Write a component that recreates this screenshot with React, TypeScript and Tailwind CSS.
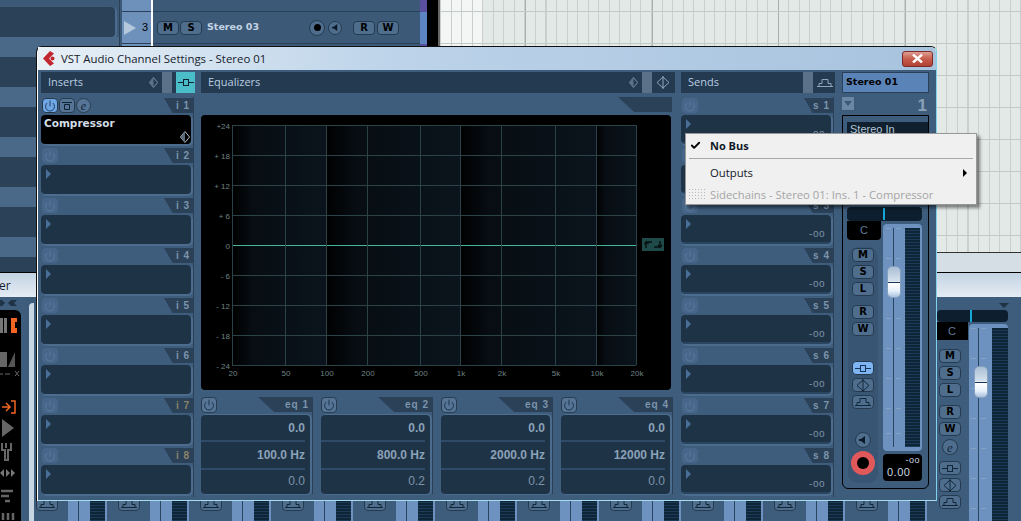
import { Power, Check } from 'lucide-react';

const panelTexture =
  'bg-[repeating-linear-gradient(to_bottom,#3d5b7a_0_1px,#3f5e7d_1px_2px)]';
const meterStripes =
  'bg-[repeating-linear-gradient(to_bottom,#0e2437_0_2px,#1b3b58_2px_3px)]';

const freqLines = [31, 84, 125, 166, 219, 259, 300, 354, 395, 435];
const freqLabels = ['20', '50', '100', '200', '500', '1k', '2k', '5k', '10k', '20k'];
const gainLabels = ['+24', '+ 18', '+ 12', '+ 6', '0', '- 6', '- 12', '- 18', '- 24'];

const eqBands = [
  { tab: 'eq 1', gain: '0.0', freq: '100.0 Hz', q: '0.0' },
  { tab: 'eq 2', gain: '0.0', freq: '800.0 Hz', q: '0.2' },
  { tab: 'eq 3', gain: '0.0', freq: '2000.0 Hz', q: '0.2' },
  { tab: 'eq 4', gain: '0.0', freq: '12000 Hz', q: '0.0' },
];

function InsertIcon({ color = '#b9cde0' }: { color?: string }) {
  return (
    <svg width="16" height="9" viewBox="0 0 16 9" fill="none" stroke={color}>
      <path d="M0 4.5h5M11 4.5h5" />
      <rect x="5.5" y="1.5" width="5" height="6" />
    </svg>
  );
}

function EqIcon({ color = '#b9cde0' }: { color?: string }) {
  return (
    <svg width="14" height="13" viewBox="0 0 14 13" fill="none" stroke={color}>
      <path d="M7 0v13M1 6.5L7 1l6 5.5L7 12z" />
    </svg>
  );
}

function SendIcon({ color = '#b9cde0' }: { color?: string }) {
  return (
    <svg width="16" height="10" viewBox="0 0 16 10" fill="none" stroke={color}>
      <path d="M0 8.5h16M2 8.5V5.5h3V1.5h6v4h3v3" />
    </svg>
  );
}

function HalfDiamond({ size = 11, fill = '#c9d6e2', half = '#c9d6e2' }: { size?: number; fill?: string; half?: string }) {
  return (
    <svg width={size} height={size + 2} viewBox="0 0 11 13">
      <path d="M5.5 0.5L10.5 6.5L5.5 12.5L0.5 6.5z" fill="none" stroke={fill} />
      <path d="M5.5 0.5L0.5 6.5L5.5 12.5z" fill={half} />
    </svg>
  );
}

function PowerButton({ active, lit }: { active?: boolean; lit?: boolean }) {
  if (lit) {
    return (
      <div className="flex h-[15px] w-[16px] items-center justify-center rounded-sm border border-[#27394c] bg-[#6fa6e6]">
        <Power size={12} color="#0f2338" strokeWidth={1.6} />
      </div>
    );
  }
  return (
    <div
      className={
        active
          ? 'flex h-[16px] w-[16px] items-center justify-center rounded-sm border border-[#283c50] bg-[#567596]'
          : 'flex h-[15px] w-[16px] items-center justify-center rounded-sm bg-[#47668a]'
      }
    >
      <Power size={12} color={active ? '#0f2338' : '#5f7f9f'} strokeWidth={1.6} />
    </div>
  );
}

function Tab({ label, tan, wide }: { label: string; tan?: boolean; wide?: boolean }) {
  return (
    <div
      className={`flex h-[15px] items-center justify-end bg-[#2a4158] pr-[3px] font-['Liberation_Sans',sans-serif] text-[10px] font-bold tracking-[1px] [clip-path:polygon(0_0,100%_0,100%_100%,30%_100%)] ${
        wide ? 'w-[54px]' : 'w-[29px]'
      } ${tan ? 'text-[#8c8468]' : 'text-[#7d95ab]'}`}
    >
      {label}
    </div>
  );
}

function Slot({ label, tan, showLevel }: { label: string; tan?: boolean; showLevel?: boolean }) {
  return (
    <div className="flex h-[50px] w-[153px] flex-col border-r border-[#2a4058]">
      <div className="flex h-[18px] items-start justify-between pt-[1px] pl-[1px]">
        <PowerButton />
        <Tab label={label} tan={tan} />
      </div>
      <div
        className={`relative h-[29px] w-[150px] rounded-sm bg-[#1f3347] shadow-[1px_1px_0_1px_#4c6c8d] ${
          showLevel ? 'border-b-2 border-[#2a4560]' : ''
        }`}
      >
        <div className="absolute top-[4px] left-[5px] h-0 w-0 border-y-[5px] border-l-[5px] border-y-transparent border-l-[#4a6f97]" />
        {showLevel && (
          <span className="absolute right-[6px] bottom-[1px] font-['Liberation_Sans',sans-serif] text-[10px] tracking-[0.5px] text-[#7d93a8]">
            -oo
          </span>
        )}
      </div>
    </div>
  );
}

function CompressorSlot() {
  return (
    <div className="flex h-[50px] w-[153px] flex-col border-r border-[#2a4058]">
      <div className="flex h-[18px] items-start justify-between pt-[1px] pl-[1px]">
        <div className="flex gap-[1px]">
          <PowerButton lit />
          <div className="flex h-[15px] w-[16px] items-center justify-center rounded-sm border border-[#283c50] bg-[#567596]">
            <svg width="10" height="10" viewBox="0 0 10 10" fill="none" stroke="#0f2338">
              <path d="M0 1.5h10M2.5 3.5h5v5h-5z" />
            </svg>
          </div>
          <div className="flex h-[15px] w-[15px] items-center justify-center rounded-full border border-[#283c50] bg-[#567596] font-['Liberation_Serif',serif] text-[12px] leading-none text-[#0f2338] italic">
            e
          </div>
        </div>
        <Tab label="i 1" />
      </div>
      <div className="relative h-[29px] w-[150px] rounded-sm bg-black px-[3px] py-[1px] font-['DejaVu_Sans',sans-serif] text-[10.5px] leading-[15px] font-bold text-[#d3dde6] shadow-[1px_1px_0_1px_#4c6c8d]">
        Compressor
        <div className="absolute right-[1px] bottom-[1px]">
          <HalfDiamond size={10} half="#5b6b7a" />
        </div>
      </div>
    </div>
  );
}

function EqGraph() {
  const bands = [
    [31, 94],
    [125, 134],
    [259, 136],
    [395, 40],
  ];
  return (
    <svg width="470" height="275" viewBox="0 0 470 275" className="rounded-sm bg-black">
      <defs>
        <linearGradient id="band">
          <stop offset="0" stopColor="#000" />
          <stop offset="0.22" stopColor="#070d13" />
          <stop offset="1" stopColor="#0b141c" />
        </linearGradient>
      </defs>
      {bands.map(([x, w]) => (
        <rect key={x} x={x} y={10} width={w} height={240} fill="url(#band)" />
      ))}
      {gainLabels.map((g, i) => (
        <g key={g}>
          <line x1="31" x2="435" y1={10.5 + i * 30} y2={10.5 + i * 30} stroke={i === 4 ? '#45b59e' : '#2b4246'} />
          <text
            x="29"
            y={13.5 + i * 30}
            textAnchor="end"
            fontSize="8"
            fill="#6f8285"
            fontFamily="'Liberation Sans', sans-serif"
          >
            {g}
          </text>
        </g>
      ))}
      {freqLines.map((x, i) => (
        <g key={x}>
          <line x1={x + 0.5} x2={x + 0.5} y1="10" y2="250" stroke="#2b4246" />
          <text
            x={x + 1}
            y="261"
            textAnchor="middle"
            fontSize="8"
            fill="#6f8285"
            fontFamily="'Liberation Sans', sans-serif"
          >
            {freqLabels[i]}
          </text>
        </g>
      ))}
      <rect x="441" y="123" width="22" height="13" fill="#1f4a4a" />
      <path
        d="M445 133v-6h6M443.500 129l2-2.500l2 2.500M459 126v6h-6M457 130l2 2.500l2-2.500"
        fill="none"
        stroke="#05100f"
        strokeWidth="1.400"
      />
    </svg>
  );
}

function EqBand({ tab, gain, freq, q }: { tab: string; gain: string; freq: string; q: string }) {
  return (
    <div className="flex h-[97px] w-[112px] flex-col border-r border-[#2a4058]">
      <div className="flex h-[18px] items-start justify-between">
        <PowerButton active />
        <Tab label={tab} wide />
      </div>
      <div className="flex h-[79px] w-[109px] flex-col rounded-sm bg-[#1f3347] pr-[5px] text-right font-['Liberation_Sans',sans-serif] shadow-[1px_0_0_1px_#4c6c8d]">
        <div className="h-[27px] border-b-2 border-[#2f4a66] text-[12px] leading-[26px] font-bold text-[#8ba1b7]">
          {gain}
        </div>
        <div className="h-[28px] border-b-2 border-[#2f4a66] text-[12px] leading-[27px] font-bold text-[#8ba1b7]">
          {freq}
        </div>
        <div className="text-[12px] leading-[22px] text-[#7d93a8]">{q}</div>
      </div>
    </div>
  );
}

function StripButton({ label }: { label: string }) {
  return (
    <div className="flex h-[14px] w-[22px] items-center justify-center rounded-sm border border-[#253a4f] bg-[#4f6e8e] font-['DejaVu_Sans',sans-serif] text-[10px] leading-none font-bold text-black">
      {label}
    </div>
  );
}

function IconButton({ children, lit }: { children: React.ReactNode; lit?: boolean }) {
  return (
    <div
      className={
        lit
          ? 'flex h-[14px] w-[22px] items-center justify-center rounded-sm border border-[#253a4f] bg-[#7eb4f2]'
          : 'flex h-[14px] w-[22px] items-center justify-center rounded-sm border border-[#253a4f] bg-[#4f6e8e]'
      }
    >
      {children}
    </div>
  );
}

function FaderScale({ height }: { height: number }) {
  const ticks = [0, 30, 60, 90, 120, 150, 180, 205];
  return (
    <svg width="20" height={height} viewBox={`0 0 20 ${height}`} fill="none">
      <line x1="9.500" x2="9.500" y1="0" y2={height} stroke="#2b4560" />
      {ticks.map((t) => (
        <path key={t} d={`M2 ${t + 0.5}h5M12 ${t + 0.5}h5`} stroke="#86a3c4" />
      ))}
    </svg>
  );
}

function FaderKnob() {
  return (
    <div className="flex h-[32px] w-[14px] items-center rounded-[5px] border border-[#86a0bf] bg-[linear-gradient(to_bottom,#a9bed5,#d3e0ec_45%,#ffffff_55%,#e6effa_80%,#a8c0dc)]">
      <div className="h-[1px] w-full bg-[#17355a]" />
    </div>
  );
}

function ChannelStrip() {
  return (
    <div className="flex w-[87px] flex-col">
      <div className="flex h-[21px] items-center border border-[#2a4058] bg-[#5a84b8] pl-[3px] font-['DejaVu_Sans',sans-serif] text-[9.5px] font-bold text-black">
        Stereo 01
      </div>
      <div className="flex h-[22px] items-start justify-between pt-[4px] pr-[2px]">
        <div className="flex h-[13px] w-[12px] items-center justify-center bg-[#6b87a5]">
          <div className="h-0 w-0 border-x-[4px] border-t-[5px] border-x-transparent border-t-[#3c5a78]" />
        </div>
        <span className="font-['Liberation_Sans',sans-serif] text-[17px] leading-[17px] font-bold text-[#8ba1b7]">1</span>
      </div>
      <div className="flex h-[374px] w-[87px] flex-col rounded-b-md border-x border-t border-b border-black pl-[4px]">
        <div className="mt-[6px] h-[78px] w-[81px] bg-[#10202f] px-[3px] font-['Liberation_Sans',sans-serif] text-[11px] leading-[14px] text-[#b5c6d6]">
          Stereo In
        </div>
        <div className="mt-[7px] flex h-[14px] w-[75px] items-center rounded-sm bg-[#0d1e2e] pl-[36px]">
          <div className="h-[12px] w-[2px] bg-[#14a7d8]" />
        </div>
        <div className="flex">
          <div className="flex w-[36px] flex-col">
            <div className="flex h-[19px] w-[34px] items-center justify-center rounded-b-sm bg-black font-['Liberation_Sans',sans-serif] text-[11px] text-[#5f7d9b]">
              C
            </div>
            <div className="mt-[7px] ml-[1px] flex h-[236px] w-[30px] flex-col items-center rounded-[10px] bg-[#385573] pt-[1px]">
              <div className="flex flex-col gap-[3px]">
                <StripButton label="M" />
                <StripButton label="S" />
                <StripButton label="L" />
              </div>
              <div className="mt-[9px] flex flex-col gap-[3px]">
                <StripButton label="R" />
                <StripButton label="W" />
              </div>
              <div className="mt-[25px] flex flex-col gap-[3px]">
                <IconButton lit>
                  <InsertIcon color="#14345c" />
                </IconButton>
                <IconButton>
                  <EqIcon color="#12263a" />
                </IconButton>
                <IconButton>
                  <SendIcon color="#12263a" />
                </IconButton>
              </div>
              <div className="mt-[23px] flex h-[16px] w-[16px] shrink-0 items-center justify-center rounded-full border border-[#253a4f] bg-[#4f6e8e] text-black">
                <svg width="8" height="8" viewBox="0 0 8 8" fill="#0b1a28">
                  <path d="M0 3h2l4-3v8L2 5H0z" />
                </svg>
              </div>
              <div className="mt-[3px] flex h-[24px] w-[24px] shrink-0 items-center justify-center rounded-full bg-[#e0585a]">
                <div className="h-[12px] w-[12px] rounded-full bg-black" />
              </div>
            </div>
          </div>
          <div className="mt-[3px] flex w-[39px] flex-col">
            <div className="relative flex h-[227px] justify-between rounded-sm bg-[#6d92bf] pt-[4px] pr-[2px] pl-[1px]">
              <FaderScale height={219} />
              <div className={`h-[219px] w-[15px] ${meterStripes}`} />
              <div className="absolute top-[42px] left-[4px]">
                <FaderKnob />
              </div>
            </div>
            <div className="mt-[3px] flex h-[27px] flex-col items-end rounded-sm bg-black pr-[2px] font-['Liberation_Sans',sans-serif] text-[#c9d6e2]">
              <span className="text-[9px] leading-[13px] tracking-[0.5px]">-oo</span>
              <span className="w-full pl-[4px] text-[11px] leading-[11px] tracking-[0.5px]">0.00</span>
            </div>
          </div>
        </div>
      </div>
    </div>
  );
}

function VstWindow() {
  return (
    <div className="absolute top-[46px] left-[36px] h-[455px] w-[901px] rounded-t-md border-x border-t border-[#111] border-r-[#7fd2ea] shadow-[inset_1px_0_0_#fff]">
      <div className="ml-[1px] flex h-[23px] items-center justify-between rounded-tr-md bg-[linear-gradient(to_right,#e8f0f6,#bcd3e9_40%,#a8c3de)] pr-[3px] pl-[5px]">
        <div className="flex items-center gap-[5px] font-['Open_Sans',sans-serif] text-[11.4px] text-[#15202c]">
          <svg width="13" height="15" viewBox="0 0 13 15" fill="#c2262e">
            <path d="M7 0L0 7.500L7 15L11 12.500L6 7.500L11 2.500z" />
            <circle cx="9.500" cy="7.500" r="2" />
          </svg>
          VST Audio Channel Settings - Stereo 01
        </div>
        <div className="flex h-[16px] w-[31px] items-center justify-center rounded-[3px] border border-[#7d2a28] bg-[linear-gradient(to_bottom,#dd9f92,#c65c4c_50%,#b24334)]">
          <svg width="11" height="9" viewBox="0 0 11 9" stroke="#fff" strokeWidth="2.400">
            <path d="M1 0.500L10 8.500M10 0.500L1 8.500" />
          </svg>
        </div>
      </div>

      <div className={`ml-[1px] flex h-[431px] gap-[6px] border-b border-[#a5dcec] pt-[2px] pl-[3px] ${panelTexture}`}>
        <div className="flex w-[154px] flex-col">
          <div className="mb-[4px] flex h-[21px] items-center justify-between bg-[#243a50] pl-[7px] font-['Open_Sans',sans-serif] text-[11px] text-[#b9cde0]">
            Inserts
            <div className="flex h-full items-center gap-[4px]">
              <HalfDiamond size={9} fill="#8ea5ba" half="#5b7089" />
              <div className="h-full w-[10px] bg-[#5b7089]" />
              <div className="flex h-full w-[19px] items-center justify-center bg-[#4abdc9]">
                <InsertIcon color="#123" />
              </div>
            </div>
          </div>
          <CompressorSlot />
          <Slot label="i 2" />
          <Slot label="i 3" />
          <Slot label="i 4" />
          <Slot label="i 5" />
          <Slot label="i 6" />
          <Slot label="i 7" tan />
          <Slot label="i 8" tan />
        </div>

        <div className="flex w-[474px] flex-col">
          <div className="mb-[4px] flex h-[21px] items-center justify-between bg-[#243a50] pr-[5px] pl-[7px] font-['Open_Sans',sans-serif] text-[11px] text-[#b9cde0]">
            Equalizers
            <div className="flex h-full items-center gap-[4px]">
              <HalfDiamond size={9} fill="#8ea5ba" half="#5b7089" />
              <div className="h-full w-[10px] bg-[#5b7089]" />
              <EqIcon color="#8ea5ba" />
            </div>
          </div>
          <div className="flex h-[18px] justify-end pr-[3px]">
            <div className="h-[15px] w-[54px] bg-[#2a4158] [clip-path:polygon(0_0,100%_0,100%_100%,30%_100%)]" />
          </div>
          <EqGraph />
          <div className="mt-[7px] flex gap-[8px]">
            {eqBands.map((b) => (
              <EqBand key={b.tab} {...b} />
            ))}
          </div>
        </div>

        <div className="flex w-[154px] flex-col">
          <div className="mb-[4px] flex h-[21px] items-center justify-between bg-[#243a50] pr-[2px] pl-[7px] font-['Open_Sans',sans-serif] text-[11px] text-[#b9cde0]">
            Sends
            <div className="flex h-full items-center gap-[4px]">
              <div className="h-full w-[10px] bg-[#5b7089]" />
              <SendIcon color="#8ea5ba" />
            </div>
          </div>
          {[1, 2, 3, 4, 5, 6, 7, 8].map((n) => (
            <Slot key={n} label={`s ${n}`} showLevel />
          ))}
        </div>

        <div className="ml-[1px]">
          <ChannelStrip />
        </div>
      </div>
    </div>
  );
}

function BusMenu() {
  return (
    <div className="absolute top-[133px] left-[685px] flex h-[72px] w-[292px] flex-col border border-[#979797] bg-[#f0f0f0] font-['Open_Sans',sans-serif] text-[11.3px] text-[#101828] shadow-[3px_3px_3px_rgba(0,0,0,0.45)]">
      <div className="flex h-[24px] items-center pl-[24px] text-[11px] font-bold">
        <Check size={11} strokeWidth={4} className="mr-[9px] -ml-[20px] text-black" />
        No Bus
      </div>
      <div className="mx-[3px] h-[1px] bg-[#a9a9a9]" />
      <div className="flex h-[28px] items-center justify-between pt-[2px] pr-[9px] pl-[24px]">
        Outputs
        <div className="h-0 w-0 border-y-[4px] border-l-[4px] border-y-transparent border-l-black" />
      </div>
      <div className="relative flex h-[18px] items-center pl-[24px] text-[#a5a5a5]">
        <div className="absolute top-[2px] left-[2px] h-[13px] w-[18px] bg-[radial-gradient(#b8b8b8_0.6px,transparent_0.8px)] bg-[length:3px_3px]" />
        Sidechains - Stereo 01: Ins. 1 - Compressor
      </div>
    </div>
  );
}

function MixerStrip() {
  return (
    <div className="flex w-[82px] shrink-0 flex-col pt-[6px]">
      <div className="flex justify-end pr-[9px]">
        <div className="h-0 w-0 border-x-[5px] border-t-[5px] border-x-transparent border-t-[#1f3347]" />
      </div>
      <div className="mt-[2px] ml-[1px] flex h-[14px] w-[71px] items-center rounded-sm bg-[#0d1e2e] pl-[33px]">
        <div className="h-[12px] w-[2px] bg-[#14a7d8]" />
      </div>
      <div className="flex">
        <div className="flex w-[33px] flex-col">
          <div className="flex h-[18px] w-[32px] items-center justify-center bg-black font-['Liberation_Sans',sans-serif] text-[11px] text-[#5f7d9b]">
            C
          </div>
          <div className="mt-[9px] ml-[3px] flex flex-col gap-[3px]">
            <StripButton label="M" />
            <StripButton label="S" />
            <StripButton label="L" />
            <div className="mt-[5px]">
              <StripButton label="R" />
            </div>
            <StripButton label="W" />
            <div className="ml-[3px] flex h-[16px] w-[16px] items-center justify-center rounded-full border border-[#253a4f] bg-[#4f6e8e] font-['Liberation_Serif',serif] text-[13px] leading-none text-[#0f2338] italic">
              e
            </div>
            <div className="mt-[3px]">
              <IconButton>
                <InsertIcon color="#12263a" />
              </IconButton>
            </div>
            <IconButton>
              <EqIcon color="#12263a" />
            </IconButton>
            <IconButton>
              <SendIcon color="#12263a" />
            </IconButton>
          </div>
        </div>
        <div className="relative mt-[2px] flex h-[200px] w-[39px] justify-between rounded-sm bg-[#6d92bf] pt-[4px]">
          <FaderScale height={196} />
          <div className={`h-[196px] w-[16px] ${meterStripes}`} />
          <div className="absolute top-[42px] left-[5px]">
            <FaderKnob />
          </div>
        </div>
      </div>
    </div>
  );
}

// strips behind the channel window: only their feet show below it
function CoveredStrip() {
  return (
    <div className="flex w-[82px] shrink-0 pt-[200px]">
      <div className="w-[34px] pl-[2px]">
        <IconButton>
          <SendIcon color="#12263a" />
        </IconButton>
      </div>
      <div className="flex h-[30px] w-[39px] justify-between bg-[#6d92bf] pr-[2px] pl-[10px]">
        <div className="w-[1px] bg-[#2b4560]" />
        <div className={`h-full w-[15px] ${meterStripes}`} />
      </div>
    </div>
  );
}

function ArrangeView() {
  return (
    <div className="flex h-[272px] bg-[#3c5a78]">
      <div className="flex w-[120px] flex-col overflow-hidden border-r border-[#2a4058] pt-[7px]">
        {[0, 1, 2, 3, 4, 5].map((n) => (
          <div key={n} className="flex h-[50px] shrink-0 flex-col">
            <div className="h-[30px] w-[115px] shrink-0 rounded-r-sm bg-[#2a4158] shadow-[1px_1px_0_1px_#4c6c8d]" />
            <div className="h-[20px] bg-[#4a6888]" />
          </div>
        ))}
      </div>
      <div className="ml-[2px] flex w-[29px] flex-col bg-[#6d91bb]">
        <div className="h-[12px] border-b border-[#2a4058]" />
        <div className="flex h-[32px] items-center justify-between border-b border-[#2a4058] pr-[3px] pl-[2px] font-['Liberation_Sans',sans-serif] text-[11px] text-black">
          <div className="h-0 w-0 border-y-[7px] border-l-[12px] border-y-transparent border-l-[#b5c8dc]" />
          3
        </div>
      </div>
      <div className="w-[2px] bg-white" />
      <div className="w-[267px]">
        <div className="h-[12px] border-b border-[#2a4058]" />
        <div className="flex h-[32px] items-center border-b border-[#2a4058] pl-[4px]">
          <div className="flex gap-[1px]">
            <StripButton label="M" />
            <StripButton label="S" />
          </div>
          <span className="ml-[5px] w-[102px] font-['DejaVu_Sans',sans-serif] text-[9.5px] font-bold text-[#c4d4e4]">
            Stereo 03
          </span>
          <div className="flex h-[16px] w-[16px] items-center justify-center rounded-full border border-[#253a4f] bg-[#4f6e8e]">
            <div className="h-[7px] w-[7px] rounded-full bg-black" />
          </div>
          <div className="ml-[3px] flex h-[14px] w-[14px] items-center justify-center rounded-full border border-[#253a4f] bg-[#4f6e8e]">
            <svg width="7" height="7" viewBox="0 0 8 8" fill="#0b1a28">
              <path d="M0 3h2l4-3v8L2 5H0z" />
            </svg>
          </div>
          <div className="ml-[11px] flex gap-[2px]">
            <StripButton label="R" />
            <StripButton label="W" />
          </div>
        </div>
        <div className="pl-[3px] font-['Liberation_Sans',sans-serif] text-[11px] leading-[11px] text-[#1f3347]">stereo</div>
      </div>
      <div className="flex w-[7px] flex-col bg-[#5b4fa0]">
        <div className="h-[12px]" />
        <div className="h-[32px] bg-[#5b84c0]" />
      </div>
      <div className="w-[11px] bg-black" />
      <div className="w-[2px] bg-[#666]" />
      <div className="flex flex-1 flex-col">
        <div className="flex-1 [background:repeating-linear-gradient(to_bottom,transparent_0_11px,#c3c9c7_11px_12px,transparent_12px_32px),repeating-linear-gradient(to_right,transparent_0_85px,#a9afad_85px_86px,transparent_86px_126.6px),repeating-linear-gradient(to_right,#c9cfcd_0_1px,transparent_1px_10.55px),linear-gradient(to_right,#f4f6f6_42px,#e3e9e7_42px)]" />
        <div className="h-[20px] border-t border-[#333] bg-[#d5dee4]" />
      </div>
    </div>
  );
}

function MixerWindow() {
  return (
    <div className="flex h-[249px] flex-col border-t border-black">
      <div className="flex h-[24px] items-end bg-[linear-gradient(to_bottom,#c3d3e3,#e4ecf4)] font-['Open_Sans',sans-serif] text-[12px] leading-[20px] text-[#15202c]">
        <span className="-ml-[1px] pb-[1px]">er</span>
      </div>
      <div className={`flex flex-1 overflow-hidden ${panelTexture}`}>
        <div className="flex w-[34px] shrink-0 items-stretch">
          <div className="flex w-[21px] shrink-0 flex-col">
            <svg width="21" height="13" viewBox="0 0 21 13" fill="#1f3347">
              <path d="M0 3h2l3 3l-3 3H0zM11 3h6l-3 3l3 3h-6l-3-3z" />
            </svg>
            <div className="flex-1 rounded-tr-md bg-black">
              <svg width="21" height="210" viewBox="0 0 21 210">
                <path d="M0 8h3v15H0zM4 8h3v15H4z" fill="#777" />
                <path d="M11 8h6v4h-2v6h2v5h-6z" fill="#f26522" />
                <path d="M0 42h7v15H0z" fill="#666" />
                <path d="M8 57l7-15v15z" fill="#555" />
                <path d="M0 64h3M5 64h5M15 61l4 5M19 61l-4 5" stroke="#666" fill="none" />
                <path d="M2 97h7M6 93l4 4l-4 4M11 91h4v12h-4" stroke="#f26522" strokeWidth="1.500" fill="none" />
                <path d="M2 109l12 9l-12 9z" fill="#666" />
                <path d="M2 133v7h3v10h3v-10h3v-7M6 133v5" stroke="#666" strokeWidth="2" fill="none" />
                <path d="M0 163l4-4v8zM10 163l-4-4v8zM11 159l4 4l-4 4" fill="#777" />
                <path d="M1 181h12M1 186h8M5 191h5" stroke="#666" strokeWidth="2.500" fill="none" />
                <path d="M3 203v7M8 203v7M13 203v7" stroke="#666" strokeWidth="2.500" fill="none" />
              </svg>
            </div>
          </div>
          <div className="mt-[6px] ml-[8px] w-[5px] rounded-tl-sm bg-[#c8d6e4]" />
        </div>
        {[0, 1, 2, 3, 4, 5, 6, 7, 8, 9, 10].map((n) => (
          <CoveredStrip key={n} />
        ))}
        <MixerStrip />
      </div>
    </div>
  );
}

export default function App() {
  return (
    <div className="relative h-[521px] w-[1021px] overflow-hidden bg-[#3c5a78]">
      <ArrangeView />
      <MixerWindow />
      <VstWindow />
      <BusMenu />
    </div>
  );
}
